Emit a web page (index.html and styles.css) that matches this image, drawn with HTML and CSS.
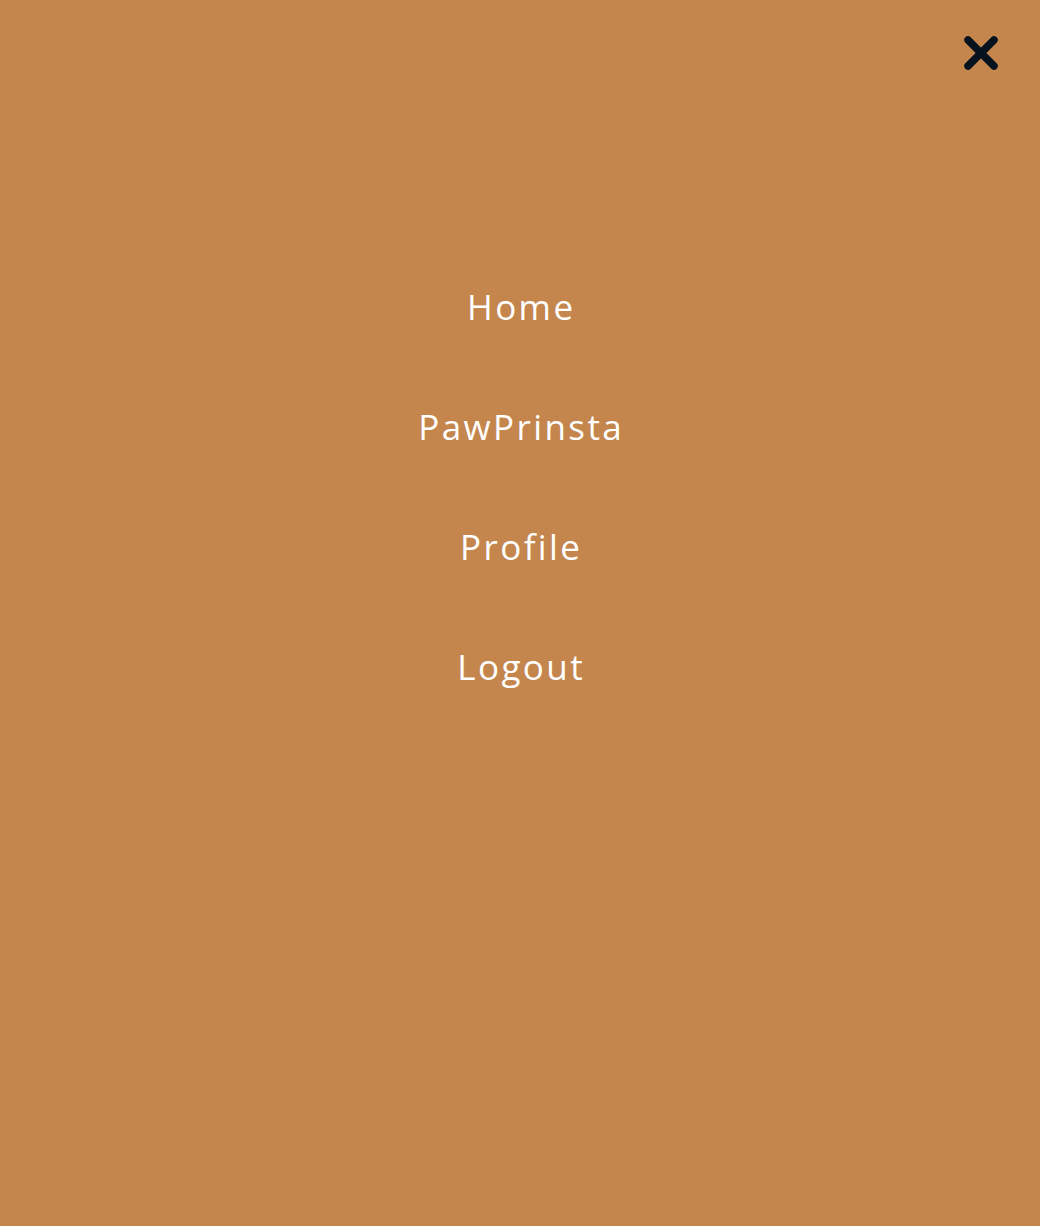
FILE: index.html
```html
<!DOCTYPE html>
<html lang="en">
<head>
<meta charset="utf-8">
<title>Menu</title>
<link rel="stylesheet" href="styles.css">
</head>
<body>
<div class="overlay">
  <button class="close" aria-label="Close menu">
    <svg width="36" height="36" viewBox="0 0 36 36"><path d="M5 5 L31 31 M31 5 L5 31" stroke="#06121e" stroke-width="7.5" stroke-linecap="round" fill="none"/></svg>
  </button>
  <nav class="menu">
    <a href="#" class="item">Home</a>
    <a href="#" class="item">PawPrinsta</a>
    <a href="#" class="item">Profile</a>
    <a href="#" class="item">Logout</a>
  </nav>
</div>
</body>
</html>
```

FILE: styles.css
```css
html, body {
  margin: 0;
  padding: 0;
  height: 100%;
}
body {
  background: #c4864d;
  font-family: "Open Sans", "Noto Sans", sans-serif;
}
.overlay {
  position: relative;
  min-height: 1226px;
}
.close {
  position: absolute;
  top: 35px;
  right: 41px;
  width: 36px;
  height: 36px;
  padding: 0;
  border: 0;
  background: none;
  cursor: pointer;
}
.close svg { display: block; }
.menu {
  display: flex;
  flex-direction: column;
  align-items: center;
  gap: 72px;
  padding-top: 283px;
}
.item {
  color: #fff;
  text-decoration: none;
  font-size: 35px;
  line-height: 48px;
  letter-spacing: 2.4px;
  padding-left: 2.4px;
}
```
